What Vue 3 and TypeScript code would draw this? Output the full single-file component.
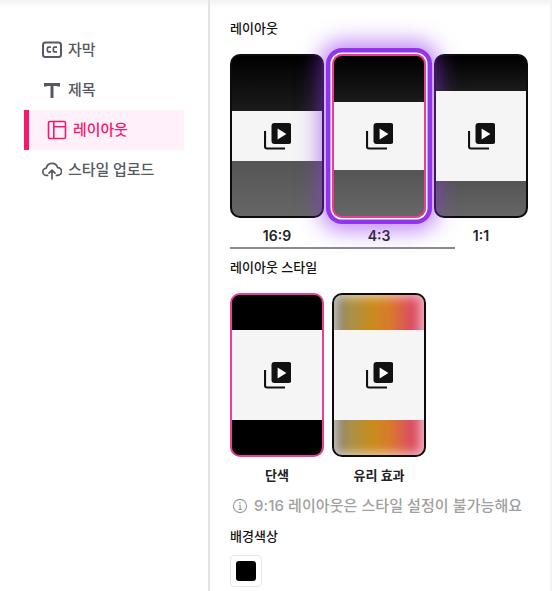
<script setup lang="ts">
interface Card { label: string; mid: number; selected?: boolean }
const layouts: Card[] = [
  { label: '16:9', mid: 50 },
  { label: '4:3', mid: 68, selected: true },
  { label: '1:1', mid: 90 },
]
const bandGradient = (mid: number): string => {
  const top = (160 - mid) / 2
  return `linear-gradient(#000 0, #1b1b1b ${top}px, #555 ${top + mid}px, #666 100%)`
}
</script>

<template>
  <div class="page">
    <nav class="nav">
      <a class="item">
        <svg class="icon" viewBox="0 0 20 20" fill="none" stroke="currentColor">
          <rect x="1" y="2.5" width="18" height="14.5" rx="2.5" stroke-width="2" />
          <path d="M9 7.2H6.4a1 1 0 0 0-1 1v2.6a1 1 0 0 0 1 1H9M15 7.2h-2.6a1 1 0 0 0-1 1v2.6a1 1 0 0 0 1 1H15" stroke-width="1.7" />
        </svg>
        <span class="text">자막</span>
      </a>
      <a class="item">
        <svg class="icon" viewBox="0 0 20 20" fill="none" stroke="currentColor">
          <path d="M3.5 6.5V4.4h13v2.1M10 4.4v13.6" stroke-width="3" />
        </svg>
        <span class="text">제목</span>
      </a>
      <a class="item active">
        <svg class="icon" viewBox="0 0 20 20" fill="none" stroke="currentColor" stroke-width="1.6">
          <rect x="1.5" y="1.5" width="17" height="17" rx="1.5" />
          <path d="M6.8 1.5v17M6.8 6.8h11.7" />
        </svg>
        <span class="text">레이아웃</span>
      </a>
      <a class="item">
        <svg class="icon" viewBox="0 0 20 20" fill="none" stroke="currentColor" stroke-width="1.7" stroke-linecap="round" stroke-linejoin="round">
          <path d="M5.6 15.4H4.6A3.6 3.6 0 0 1 4.3 8.2 5.8 5.8 0 0 1 15.6 7.6a3.9 3.9 0 0 1 .1 7.8h-1.3" />
          <path d="M10 18.8V10.6M7 13.2l3-3 3 3" />
        </svg>
        <span class="text">스타일 업로드</span>
      </a>
    </nav>

    <main class="panel">
      <h3 class="title first">레이아웃</h3>
      <div class="cards">
        <div v-for="c in layouts" :key="c.label" class="col">
          <div class="card" :class="{ selected: c.selected }" :style="{ background: bandGradient(c.mid) }">
            <div class="mid" :style="{ height: c.mid + 'px' }">
              <svg class="play" viewBox="0 0 27 27">
                <path d="M1 8v15.5a2 2 0 0 0 2 2h18" fill="none" stroke="#111" stroke-width="2.2" />
                <rect x="7.5" y="0" width="20" height="21" rx="3" fill="#111" />
                <path d="M13.6 5.5l8.8 5.5-8.8 5.5z" fill="#fff" />
              </svg>
            </div>
          </div>
          <span class="label">{{ c.label }}</span>
        </div>
      </div>
      <div class="scrollbar"></div>

      <h3 class="title second">레이아웃 스타일</h3>
      <div class="cards">
        <div class="col">
          <div class="card solid picked">
            <div class="mid tall">
              <svg class="play" viewBox="0 0 27 27">
                <path d="M1 8v15.5a2 2 0 0 0 2 2h18" fill="none" stroke="#111" stroke-width="2.2" />
                <rect x="7.5" y="0" width="20" height="21" rx="3" fill="#111" />
                <path d="M13.6 5.5l8.8 5.5-8.8 5.5z" fill="#fff" />
              </svg>
            </div>
          </div>
          <span class="label kr">단색</span>
        </div>
        <div class="col">
          <div class="card glass">
            <div class="mid tall">
              <svg class="play" viewBox="0 0 27 27">
                <path d="M1 8v15.5a2 2 0 0 0 2 2h18" fill="none" stroke="#111" stroke-width="2.2" />
                <rect x="7.5" y="0" width="20" height="21" rx="3" fill="#111" />
                <path d="M13.6 5.5l8.8 5.5-8.8 5.5z" fill="#fff" />
              </svg>
            </div>
          </div>
          <span class="label kr">유리 효과</span>
        </div>
      </div>

      <p class="info">
        <svg class="info-icon" viewBox="0 0 16 16" fill="none" stroke="#9c9c9c">
          <circle cx="8" cy="8" r="6.6" stroke-width="1.1" />
          <path d="M6.8 7.2H8.2V11.4M6.6 11.4h3.2" stroke-width="1.1" />
          <circle cx="7.9" cy="4.9" r=".8" fill="#9c9c9c" stroke="none" />
        </svg>
        <span>9:16 레이아웃은 스타일 설정이 불가능해요</span>
      </p>

      <h3 class="title third">배경색상</h3>
      <div class="swatch"><i></i></div>
    </main>
  </div>
</template>

<style>
html, body { margin: 0; background: #fff; }
</style>

<style scoped>
.page {
  position: relative;
  display: flex;
  width: 552px;
  height: 591px;
  overflow: hidden;
  background: linear-gradient(#f2f2f2, #fff 7px);
  font-family: Inter, "Noto Sans CJK KR", sans-serif;
  color: #111;
}
.nav {
  box-sizing: border-box;
  flex: none;
  width: 208px;
  padding: 30px 0 0 24px;
  display: flex;
  flex-direction: column;
}
.item {
  box-sizing: border-box;
  width: 160px;
  height: 40px;
  display: flex;
  align-items: center;
  gap: 6px;
  padding-left: 18px;
  font-size: 15px;
  font-weight: 500;
  color: #555860;
  letter-spacing: -0.1px;
}
.text { margin-bottom: 4px; }
.icon { width: 20px; height: 20px; flex: none; margin-bottom: 1px; }
.item.active {
  border-left: 5px solid #f5186c;
  background: #fff0fa;
  color: #f5186c;
}
.panel {
  box-sizing: border-box;
  flex: 1;
  border-left: 2px solid #e4e4e4;
  border-right: 2px solid #f2f2f2;
  padding-left: 20px;
  min-width: 0;
}
.title {
  margin: 0;
  font-size: 13px;
  line-height: 18px;
  font-weight: 500;
  color: #111;
}
.title.first { margin-top: 19px; margin-bottom: 17px; }
.title.second { margin-top: 9px; margin-bottom: 17px; }
.title.third { margin-top: 11px; margin-bottom: 10px; }
.cards { display: flex; gap: 8px; }
.col { width: 94px; display: flex; flex-direction: column; align-items: center; }
.card {
  box-sizing: border-box;
  width: 94px;
  height: 164px;
  border: 2px solid #0c0c0c;
  border-radius: 10px;
  overflow: hidden;
  display: flex;
  align-items: center;
  background-origin: padding-box;
}
.card.selected {
  position: relative;
  z-index: 1;
  border-color: #ee3a92;
  box-shadow: 0 0 0 1.5px #fff, 0 0 0 6px #9234ee, 0 0 22px 12px rgba(146, 52, 238, 0.62);
}
.solid { background: #000; }
.picked { border-color: #ea3f97; }
.glass {
  position: relative;
  background: linear-gradient(90deg, #86807a, #a8904a 18%, #c98c1d 42%, #d87a2c 62%, #dc5060 85%, #e0627c);
}
.glass::before {
  content: "";
  position: absolute;
  inset: 0;
  box-shadow: inset 0 0 10px 3px rgba(255, 255, 255, 0.55);
}
.mid {
  position: relative;
  z-index: 1;
  width: 100%;
  background: #f5f5f5;
  display: flex;
  align-items: center;
  justify-content: center;
}
.mid.tall { height: 90px; }
.play { width: 27px; height: 27px; }
.label {
  margin-top: 9px;
  font-size: 14px;
  line-height: 18px;
  font-weight: 600;
  color: #222;
}
.label.kr { font-size: 13px; }
.scrollbar {
  width: 225px;
  height: 2px;
  margin-top: 2px;
  background: #8c8c8c;
}
.info {
  margin: 12px 0 0;
  display: flex;
  align-items: center;
  gap: 6px;
  padding-left: 2px;
  font-size: 15px;
  line-height: 20px;
  font-weight: 500;
  color: #a0a0a0;
  white-space: nowrap;
  letter-spacing: 0.07px;
}
.info-icon { width: 16px; height: 16px; flex: none; }
.swatch {
  box-sizing: border-box;
  width: 32px;
  height: 32px;
  border: 1px solid #e8e8e8;
  border-radius: 4px;
  display: flex;
  align-items: center;
  justify-content: center;
}
.swatch i {
  display: block;
  width: 20px;
  height: 20px;
  background: #000;
  border-radius: 3px;
}
</style>
